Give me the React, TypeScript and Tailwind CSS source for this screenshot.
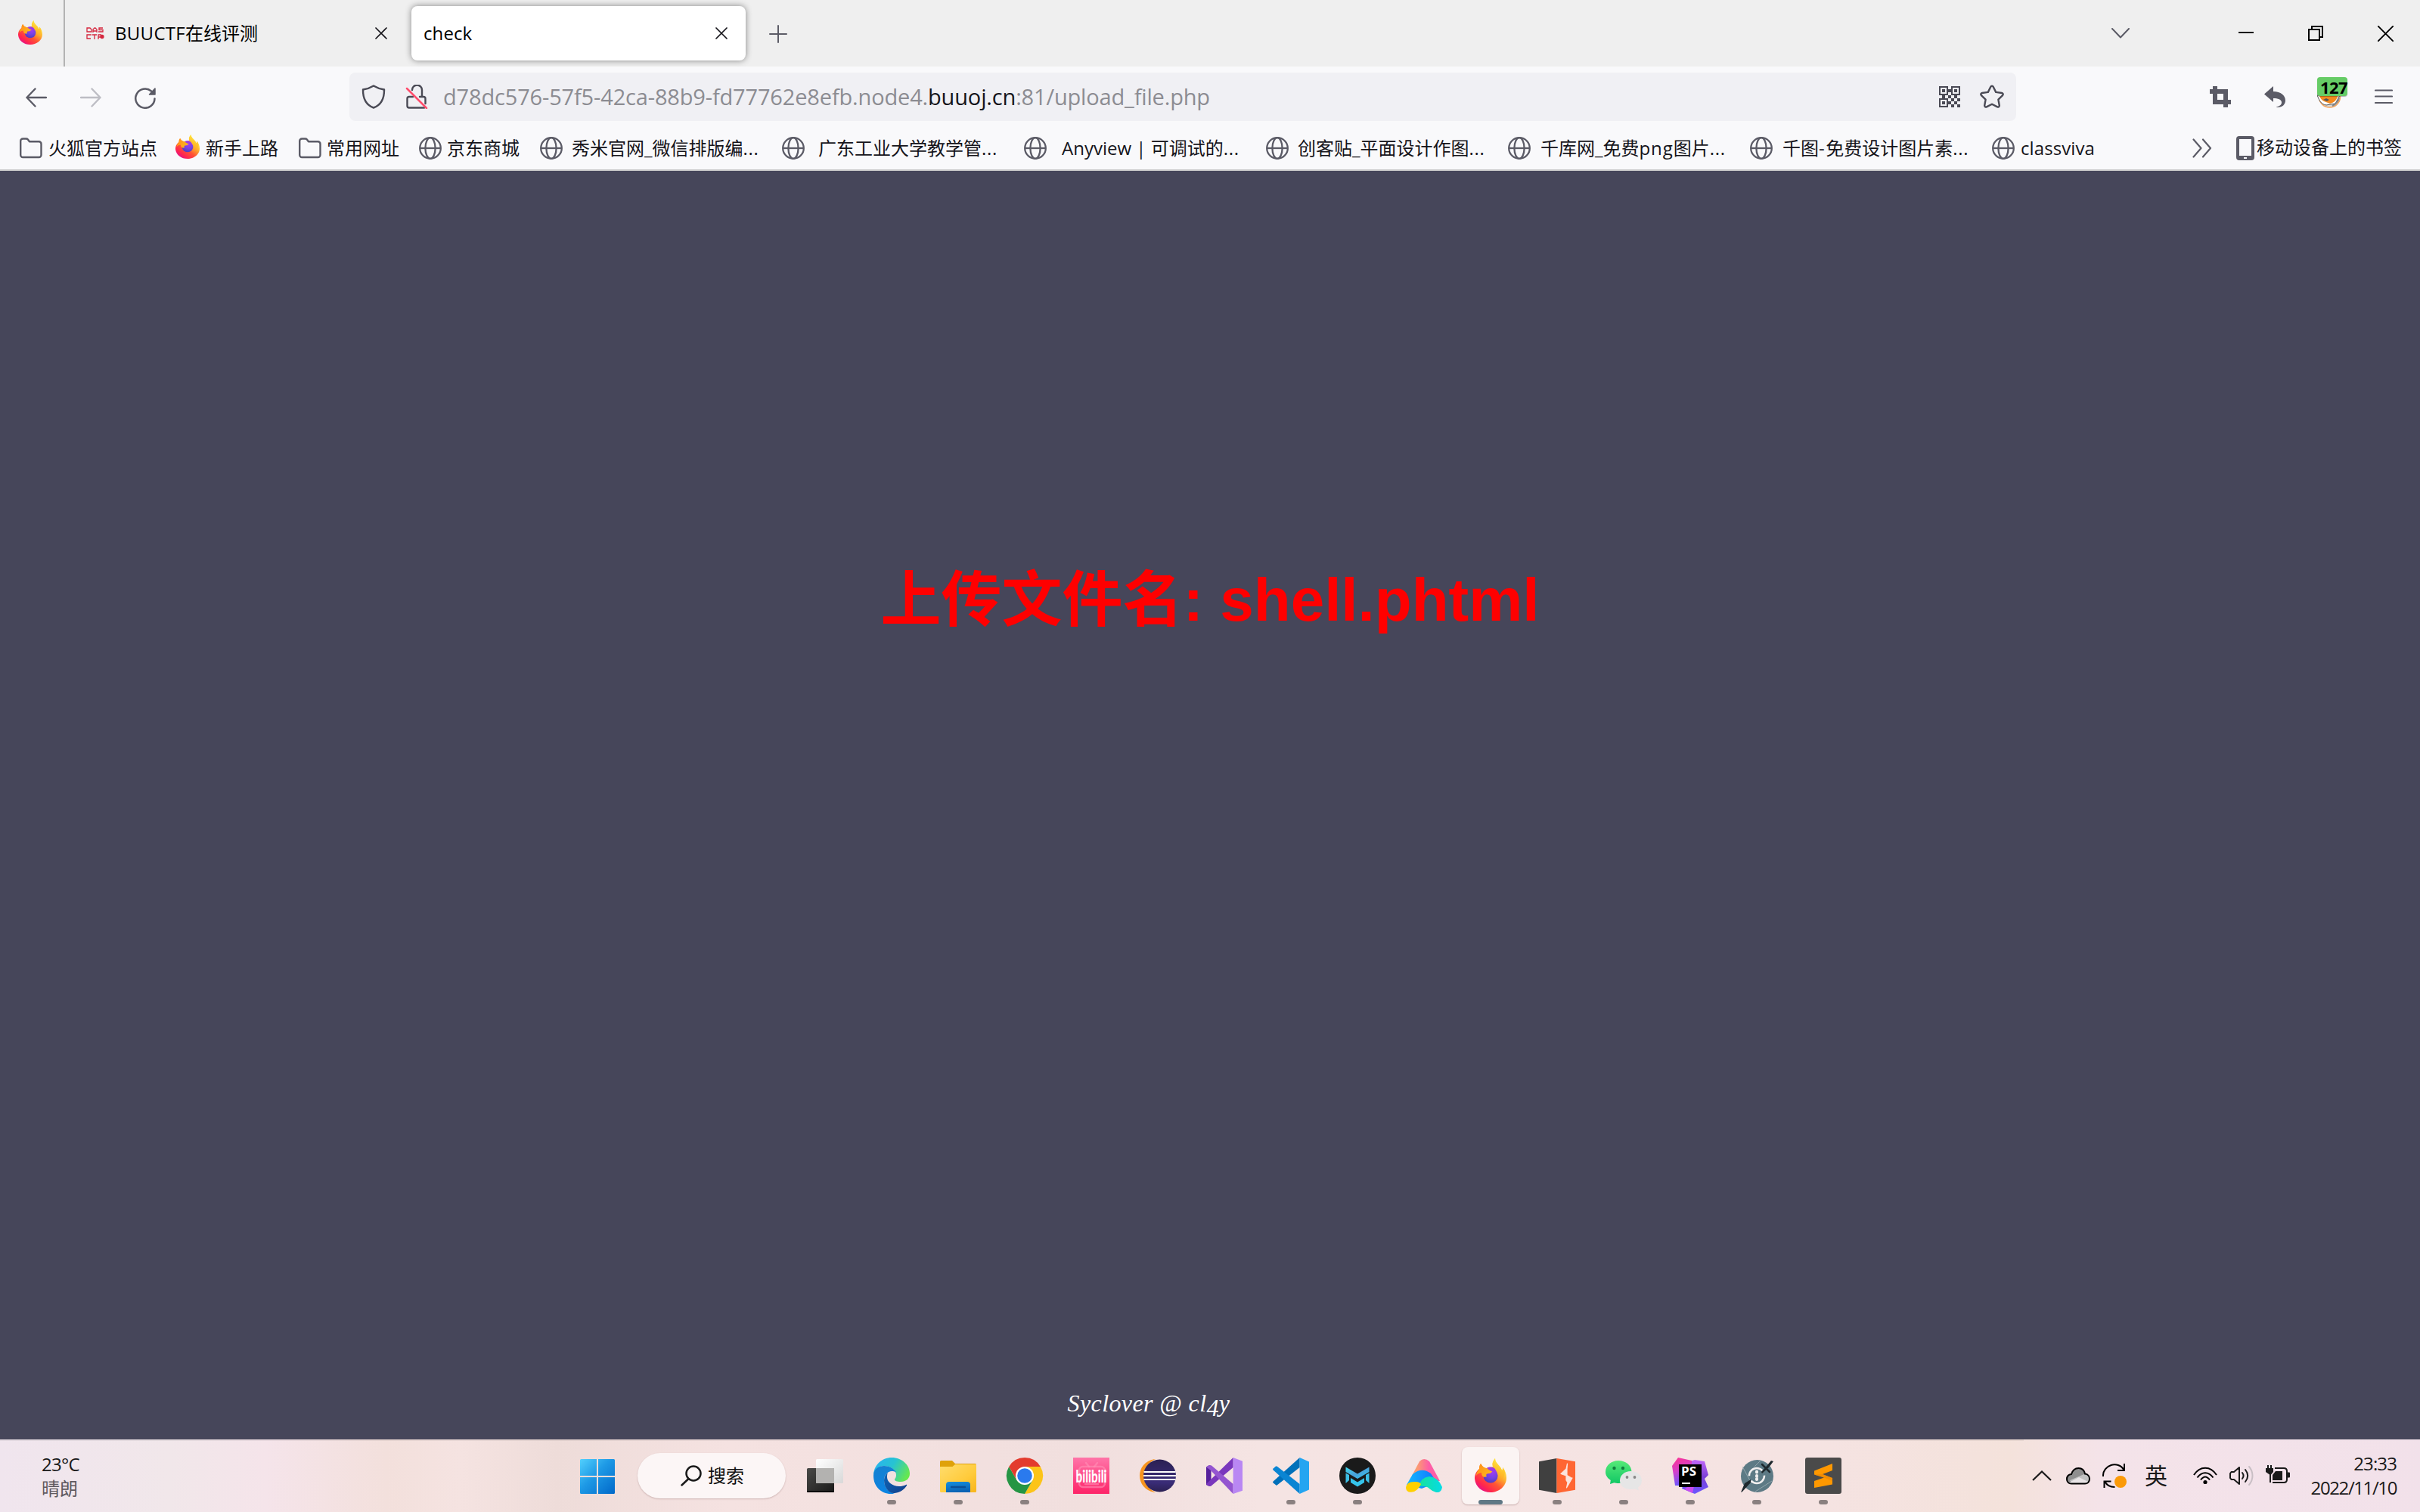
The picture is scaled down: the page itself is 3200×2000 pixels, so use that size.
import React, { type ReactNode } from "react";

/* ---------- browser glyphs ---------- */

function FirefoxLogo({ className, id }: { className: string; id: string }) {
  return (
    <svg viewBox="3 1 42 45" preserveAspectRatio="none" className={className}>
      <defs>
        <linearGradient id={id + "a"} x1="0.85" y1="0.1" x2="0.2" y2="0.95">
          <stop offset="0.05" stopColor="#fff44f" />
          <stop offset="0.35" stopColor="#ffb02e" />
          <stop offset="0.6" stopColor="#ff5634" />
          <stop offset="0.85" stopColor="#ff2450" />
          <stop offset="1" stopColor="#e3128a" />
        </linearGradient>
        <radialGradient id={id + "b"} cx="0.6" cy="0.25" r="0.8">
          <stop offset="0" stopColor="#a43bf0" />
          <stop offset="0.5" stopColor="#7542e5" />
          <stop offset="1" stopColor="#4a3db8" />
        </radialGradient>
        <linearGradient id={id + "c"} x1="0.7" y1="0" x2="0.4" y2="1">
          <stop offset="0" stopColor="#fff14a" />
          <stop offset="0.5" stopColor="#ffc02a" />
          <stop offset="1" stopColor="#ff8a1f" stopOpacity="0" />
        </linearGradient>
        <linearGradient id={id + "d"} x1="0" y1="0" x2="1" y2="0.7">
          <stop offset="0" stopColor="#ff8a16" />
          <stop offset="1" stopColor="#ffb81f" />
        </linearGradient>
      </defs>
      <path
        d="M30 1c-4 5-4 8-3 11l-9 2c-4-1-5-3-7-6-2 3-2 5-2 7C4 19 3 24 3 28c1 11 10 18 21 18s21-8 21-19c0-6-2-10-5-14 0 2 0 3-1 4-2-7-9-9-9-16Z"
        fill={`url(#${id}a)`}
      />
      <path
        d="M30 1c-4 5-4 8-2 12 6 4 8 10 5 16-1 3-4 5-8 6 10 0 17-5 18-15 0-2-1-5-3-7 0 2 0 3-1 4-2-7-9-9-9-16Z"
        fill={`url(#${id}c)`}
      />
      <circle cx="24" cy="24" r="9.6" fill={`url(#${id}b)`} />
      <path
        d="M11 8c-2 3-2 5-2 7-2 2-4 6-4 9 2-3 5-4 7-4 0 5 3 7 7 5-2-3 0-4 4-4 2-1 3-2 3-3-3-1-5-3-8-4-4-1-5-3-7-6Z"
        fill={`url(#${id}d)`}
      />
      <path d="M19 14c3-2 8-2 11 1 1 2 2 4 2 6-2-3-4-3-6-3-3 0-4-3-7-4Z" fill="#9b3be6" />
    </svg>
  );
}

function Folder() {
  return (
    <svg viewBox="0 0 32 32" className="size-8" fill="none" stroke="#5b5b66" strokeWidth="2.4" strokeLinejoin="round">
      <path d="M3.200 25V6.500a3 3 0 0 1 3-3h4.500a3 3 0 0 1 2.200 1l2 2.700h12.600a3 3 0 0 1 3 3V25a3 3 0 0 1-3 3H6.200a3 3 0 0 1-3-3Z" />
    </svg>
  );
}

function Globe() {
  return (
    <svg viewBox="0 0 32 32" className="size-8" fill="none" stroke="#5b5b66" strokeWidth="2.3">
      <circle cx="16" cy="16" r="13.800" />
      <ellipse cx="16" cy="16" rx="6.600" ry="13.800" />
      <path d="M2 16h28" />
    </svg>
  );
}

function Cross({ className }: { className: string }) {
  return (
    <svg viewBox="0 0 16 16" className={className} stroke="#15141a" strokeWidth="1.7" strokeLinecap="round">
      <path d="M1 1l14 14M15 1 1 15" />
    </svg>
  );
}

/* ---------- tab strip ---------- */

function TabStrip() {
  return (
    <div className="flex h-[88px] items-center bg-[#efefef] text-2xl text-black">
      <div className="flex h-full w-[86px] items-center border-r-2 border-[#b3b3b3] pl-6">
        <FirefoxLogo id="ft" className="h-8 w-8 -translate-y-px" />
      </div>
      <div className="flex h-full w-[458px] items-center pl-7">
        <svg viewBox="0 0 24 16" className="h-4 w-6" fill="none" stroke="#d5273e" strokeWidth="1.300">
          <path d="M1 1h4l2 2v3H1ZM9 7V3l2-2h1l2 2v4M9 5h5M22 1h-5v2.500h5V6h-6" />
          <path d="M7 10H1v5h5M8 10h6M11 10v6M16 16v-6h4M16 13h3" />
          <circle cx="21" cy="12.500" r="2" fill="#d5273e" />
        </svg>
        <span className="ml-3.5 w-[344px] leading-8">
          <span className="tracking-[0.3px]">BUUCTF</span>在线评测
        </span>
        <Cross className="size-4" />
      </div>
      <div className="flex h-[72px] w-[442px] items-center justify-between rounded-lg bg-white pl-4 pr-6 shadow-[0_0_8px_rgba(0,0,0,0.45)]">
        <span className="tracking-[0.1px]">check</span>
        <Cross className="size-4" />
      </div>
      <svg viewBox="0 0 24 24" className="ml-[31px] mt-0.5 size-6" stroke="#5b5b66" strokeWidth="2" strokeLinecap="round">
        <path d="M12 1v22M1 12h22" />
      </svg>
      <div className="ml-auto flex items-center">
        <svg viewBox="0 0 24 14" className="mr-36 h-[14px] w-6" fill="none" stroke="#5b5b66" strokeWidth="2" strokeLinecap="round" strokeLinejoin="round">
          <path d="m1 1 11 11.500L23 1" />
        </svg>
        <svg viewBox="0 0 20 20" className="mr-[72px] size-5" stroke="#000" strokeWidth="2">
          <path d="M0 9h20" />
        </svg>
        <svg viewBox="0 0 20 20" className="mr-[72px] size-5" fill="none" stroke="#000" strokeWidth="2">
          <path d="M1 5h14v14H1ZM5 5V1h14v14h-4" />
        </svg>
        <svg viewBox="0 0 20 20" className="mr-[35px] size-[21px]" stroke="#000" strokeWidth="1.800">
          <path d="m0 0 20 20M20 0 0 20" />
        </svg>
      </div>
    </div>
  );
}

/* ---------- navigation toolbar ---------- */

function QrIcon() {
  return (
    <svg viewBox="0 0 28 28" className="size-7" fill="#4a4a55">
      <path fillRule="evenodd" d="M0 0h12v12H0ZM2 2v8h8V2ZM16 0h12v12H16ZM18 2v8h8V2ZM0 16h12v12H0ZM2 18v8h8v-8Z" />
      <path d="M4 4h4v4H4ZM20 4h4v4h-4ZM4 20h4v4H4ZM12 4h4v4h-4ZM4 12h4v4H4ZM12 12h4v4h-4ZM20 12h4v4h-4ZM16 16h4v4h-4ZM24 16h4v4h-4ZM12 20h4v4h-4ZM20 20h4v4h-4ZM16 24h4v4h-4ZM24 24h4v4h-4Z" />
    </svg>
  );
}

function Toolbar() {
  return (
    <div className="flex h-[80px] items-center bg-[#f9f9fb] pl-[34px]">
      <svg viewBox="0 0 28 26" className="mt-0.5 h-[26px] w-7" fill="none" stroke="#5b5b66" strokeWidth="2.400" strokeLinecap="round" strokeLinejoin="round">
        <path d="M12.500 1.500 1.500 13l11 11.500M1.500 13H27" />
      </svg>
      <svg viewBox="0 0 28 26" className="ml-11 mt-0.5 h-[26px] w-7" fill="none" stroke="#bdbdc4" strokeWidth="2.400" strokeLinecap="round" strokeLinejoin="round">
        <path d="m15.500 1.500 11 11.500-11 11.500M26.500 13H1" />
      </svg>
      <svg viewBox="0 0 28 28" className="ml-11 mt-1 size-7" fill="none" stroke="#5b5b66" strokeWidth="2.500" strokeLinecap="round">
        <path d="M26.500 14.500A12.600 12.600 0 1 1 22 4.500" />
        <path d="M27 1v8h-7.500Z" fill="#5b5b66" stroke="#5b5b66" strokeWidth="1.500" strokeLinejoin="round" />
      </svg>
      <div className="ml-[256px] flex h-16 w-[2204px] items-center rounded-lg bg-[#f0f0f4] pl-4">
        <svg viewBox="0 0 32 32" className="size-8" fill="none" stroke="#4a4a55" strokeWidth="2.400" strokeLinejoin="round">
          <path d="M16 1.500C20 4 25 5.800 30 6.500c.2 12-4.500 20.500-14 24-9.500-3.500-14.200-12-14-24C7 5.800 12 4 16 1.500Z" />
        </svg>
        <svg viewBox="0 0 30 32" className="ml-[26px] h-8 w-[30px]" fill="none" stroke="#4a4a55" strokeWidth="2.400" strokeLinecap="round">
          <path d="M9 7a6.500 6.500 0 0 1 13 0v8M10 16H5a2.500 2.500 0 0 0-2.500 2.500V28A2.500 2.500 0 0 0 5 30.500h20M19 16h5a2.500 2.500 0 0 1 2.500 2.500V25" />
          <path d="m2 5 26 26" stroke="#ff4f6e" strokeWidth="2.500" />
        </svg>
        <span className="ml-5 whitespace-nowrap text-[29px] leading-10 tracking-[-0.16px] text-[#8c8c92]">
          d78dc576-57f5-42ca-88b9-fd77762e8efb.node4.<span className="text-[#15141a]">buuoj.cn</span>:81/upload_file.php
        </span>
        <div className="ml-auto mr-4 flex items-center gap-[26px]">
          <QrIcon />
          <svg viewBox="0 0 32 32" className="size-8" fill="none" stroke="#4a4a55" strokeWidth="2.400" strokeLinejoin="round">
            <path d="M14.300 2.800c.7-1.400 2.700-1.400 3.400 0l3.500 7.100 7.900 1.100c1.500.2 2.100 2 1 3.100l-5.700 5.500 1.400 7.900c.2 1.500-1.300 2.600-2.700 1.900L16 25.700l-7.100 3.700c-1.400.7-2.900-.4-2.700-1.900l1.400-7.900-5.700-5.500c-1.100-1.100-.5-2.900 1-3.100l7.900-1.100Z" />
          </svg>
        </div>
      </div>
      <svg viewBox="0 0 28 28" className="ml-[256px] size-7" fill="#5b5b66">
        <path fillRule="evenodd" d="M4 0h6v4h14v14h4v6h-4v4h-6v-4H4V10H0V4h4ZM10 10v8h8v-8Z" />
      </svg>
      <svg viewBox="0 0 28 28" className="ml-11 size-7" fill="#5b5b66">
        <path d="M12 0v7c10 0 16 5 16 12 0 5-4 9-10 9-1 0-2 0-2-.5 6-1.500 7-4 7-6 0-4-5-5.500-11-5.500v5L0 10.500Z" />
      </svg>
      <div className="relative ml-[42px] size-8">
        <svg viewBox="0 0 32 32" className="size-8">
          <circle cx="16.500" cy="16" r="14" fill="#d8d8d8" stroke="#f5a55c" strokeWidth="1.500" />
          <path d="M0 14c3 7 5 12 12 13l12-2 6-11Z" fill="#fff" stroke="#555" strokeWidth="1" />
          <path d="M2 13c2 4 3 7 7 9l8 3c5-1 9-4 11-12Z" fill="#f48a1f" />
          <path d="m8 20 4-2 4 2-3 2Z" fill="#555" />
          <path d="M20 28c4-2 8-5 9-11" fill="none" stroke="#888" strokeWidth="2" />
        </svg>
        <div className="absolute -top-2.5 left-0 flex h-[25px] w-10 items-center justify-center rounded-sm bg-[#66cc66] pl-1 font-[Noto_Sans] text-[22px] font-bold leading-none tracking-[-0.5px] text-black shadow-[0_1px_1px_rgba(0,0,0,0.3)]">
          127
        </div>
      </div>
      <svg viewBox="0 0 24 20" className="ml-11 h-5 w-6" stroke="#5b5b66" strokeWidth="2.200" strokeLinecap="round">
        <path d="M1 1.500h22M1 9.500h22M1 18h22" />
      </svg>
    </div>
  );
}

/* ---------- bookmarks ---------- */

function Bookmark({ icon, className, children }: { icon: ReactNode; className: string; children: ReactNode }) {
  return (
    <div className={"flex shrink-0 items-center whitespace-nowrap " + className}>
      {icon}
      <span>{children}</span>
    </div>
  );
}

function Dots() {
  return <span className="tracking-[0.7px]">...</span>;
}

function BookmarksBar() {
  return (
    <div className="flex h-[58px] items-center border-b-2 border-[#cccccc] bg-[#f9f9fb] pl-6 text-2xl leading-8 text-[#15141a]">
      <Bookmark className="w-[208px] gap-2" icon={<Folder />}>火狐官方站点</Bookmark>
      <Bookmark className="w-[161px] gap-2" icon={<FirefoxLogo id="fb" className="mb-1 h-8 w-8" />}>新手上路</Bookmark>
      <Bookmark className="w-[160px] gap-[7px]" icon={<Folder />}>常用网址</Bookmark>
      <Bookmark className="w-[160px] gap-1.5" icon={<Globe />}>京东商城</Bookmark>
      <Bookmark className="w-[320px] gap-[11px]" icon={<Globe />}>秀米官网_微信排版编<Dots /></Bookmark>
      <Bookmark className="w-[320px] gap-[17px]" icon={<Globe />}>广东工业大学教学管<Dots /></Bookmark>
      <Bookmark className="w-[320px] gap-[19px]" icon={<Globe />}>Anyview | 可调试的<Dots /></Bookmark>
      <Bookmark className="w-[320px] gap-[11px]" icon={<Globe />}>创客贴_平面设计作图<Dots /></Bookmark>
      <Bookmark className="w-[320px] gap-3" icon={<Globe />}>
        千库网_免费<span className="tracking-[0.9px]">png</span>图片<Dots />
      </Bookmark>
      <Bookmark className="w-[320px] gap-3" icon={<Globe />}>
        千图<span className="tracking-[1.5px]">-</span>免费设计图片素<Dots />
      </Bookmark>
      <Bookmark className="w-[140px] gap-[7px]" icon={<Globe />}>
        <span className="tracking-[0.1px]">classviva</span>
      </Bookmark>
      <div className="ml-auto mr-6 flex items-center">
        <svg viewBox="0 0 26 26" className="mr-8 size-[26px]" fill="none" stroke="#5b5b66" strokeWidth="2.200" strokeLinecap="round" strokeLinejoin="round">
          <path d="m1.500 1.500 10 11.500-10 11.500M14 1.500 24 13 14 24.500" />
        </svg>
        <svg viewBox="0 0 24 32" className="mr-[3px] h-8 w-6" fill="#5b5b66">
          <path fillRule="evenodd" d="M4 0h16a4 4 0 0 1 4 4v24a4 4 0 0 1-4 4H4a4 4 0 0 1-4-4V4a4 4 0 0 1 4-4ZM4 4v22h16V4ZM10 28v2h4v-2Z" />
        </svg>
        <span className="-translate-y-px">移动设备上的书签</span>
      </div>
    </div>
  );
}

/* ---------- taskbar icons, all on a 48 unit grid ---------- */

const WindowsIcon = (
  <>
    <defs>
      <linearGradient id="win" x1="0" y1="0" x2="48" y2="48" gradientUnits="userSpaceOnUse">
        <stop offset="0" stopColor="#56d4ff" />
        <stop offset="0.45" stopColor="#1e9ae6" />
        <stop offset="1" stopColor="#0067c8" />
      </linearGradient>
    </defs>
    <path fill="url(#win)" d="M2.500 2H23v22H1V3.500A1.500 1.500 0 0 1 2.500 2ZM25 2h20.500A1.500 1.500 0 0 1 47 3.500V24H25ZM1 26h22v22H2.500A1.500 1.500 0 0 1 1 46.500ZM25 26h22v20.500a1.500 1.500 0 0 1-1.500 1.500H25Z" />
  </>
);

const TaskViewIcon = (
  <>
    <defs>
      <linearGradient id="tv1" x1="0" y1="0" x2="1" y2="1">
        <stop offset="0" stopColor="#4a4a48" />
        <stop offset="1" stopColor="#1a1a19" />
      </linearGradient>
      <linearGradient id="tv2" x1="0" y1="0" x2="1" y2="1">
        <stop offset="0" stopColor="#ffffff" />
        <stop offset="1" stopColor="#d8d8d8" />
      </linearGradient>
    </defs>
    <rect x="0" y="14" width="36" height="32" rx="1.500" fill="url(#tv1)" />
    <path d="M0 44h36v.5a1.500 1.500 0 0 1-1.500 1.500h-33A1.500 1.500 0 0 1 0 44.500Z" fill="#050505" />
    <rect x="12" y="2" width="36" height="32" rx="1.500" fill="url(#tv2)" />
    <path d="M12 14h24v20H13.500a1.500 1.500 0 0 1-1.500-1.500Z" fill="#b3b2b0" />
  </>
);

const EdgeIcon = (
  <>
    <defs>
      <linearGradient id="eg1" x1="0" y1="0.2" x2="1" y2="0.6">
        <stop offset="0" stopColor="#2ab3f0" />
        <stop offset="0.5" stopColor="#27c3d2" />
        <stop offset="1" stopColor="#66e84e" />
      </linearGradient>
      <linearGradient id="eg2" x1="0.2" y1="0" x2="0.5" y2="1">
        <stop offset="0" stopColor="#1580d0" />
        <stop offset="1" stopColor="#0b84e3" />
      </linearGradient>
      <linearGradient id="eg3" x1="0" y1="0" x2="1" y2="0.8">
        <stop offset="0" stopColor="#0c66b8" />
        <stop offset="1" stopColor="#13418d" />
      </linearGradient>
    </defs>
    <path d="M0 24C0 10 11 0 24 0c14 0 24 10 24 21 0 7-5 11-12 11-5 0-8-1-8-3 0-1 2-2 2-6 0-7-8-12-16-12C6 11 1 18 0 24Z" fill="url(#eg1)" />
    <path d="M0 24c0-8 6-13 14-13 8 0 15 5 16 9-2-2-4-2-6-2-5 0-10 5-10 12 0 9 6 17 14 17-2 1-3 1-5 1C10 48 0 38 0 24Z" fill="url(#eg2)" />
    <path d="M19 20c-3 2-5 6-5 10 0 10 7 18 14 17 8-1 13-5 16-10 .6-1-.3-1.500-1-1-3 1.500-6 2-9 2-9 0-16-6-16-12 0-2 0-4 1-6Z" fill="url(#eg3)" />
  </>
);

const ExplorerIcon = (
  <>
    <defs>
      <linearGradient id="ex1" x1="0" y1="0" x2="1" y2="1">
        <stop offset="0" stopColor="#ffdd6e" />
        <stop offset="0.6" stopColor="#ffcb3c" />
        <stop offset="1" stopColor="#f8b51a" />
      </linearGradient>
      <linearGradient id="ex2" x1="0" y1="0" x2="0.3" y2="1">
        <stop offset="0" stopColor="#1590df" />
        <stop offset="1" stopColor="#0c63b4" />
      </linearGradient>
    </defs>
    <path d="M1.500 4H16l4 4h26.500a1.500 1.500 0 0 1 1.500 1.500V14H0V5.500A1.500 1.500 0 0 1 1.500 4Z" fill="#dfa10a" />
    <path d="M0 12h16.500L20 9h28v35.500a1.500 1.500 0 0 1-1.500 1.500h-45A1.500 1.500 0 0 1 0 44.500Z" fill="url(#ex1)" />
    <path d="M8 46V36a4 4 0 0 1 4-4h24a4 4 0 0 1 4 4v10Z" fill="url(#ex2)" />
    <path d="M15 39h18" stroke="#0b4f96" strokeWidth="2.400" strokeLinecap="round" />
  </>
);

const ChromeIcon = (
  <>
    <path d="M24 12h20.800A24 24 0 0 1 24 48l10.400-18Z" fill="#fcc419" />
    <path d="M3.200 12 13.600 30 24 36l10.400-6L24 48A24 24 0 0 1 3.200 12Z" fill="#259544" />
    <path d="M3.200 12 13.600 30 24 12h20.800A24 24 0 0 0 3.200 12Z" fill="#e33b2e" />
    <circle cx="24" cy="24" r="12" fill="#fff" />
    <circle cx="24" cy="24" r="9.800" fill="#2a7aee" />
  </>
);

const BilibiliIcon = (
  <>
    <defs>
      <linearGradient id="bl" x1="0" y1="0" x2="0" y2="1">
        <stop offset="0" stopColor="#ff74a8" />
        <stop offset="1" stopColor="#fd2468" />
      </linearGradient>
    </defs>
    <rect width="48" height="48" fill="url(#bl)" />
    <g fill="none" stroke="#ff8fb6" strokeOpacity="0.6" strokeWidth="2.500" strokeLinecap="round">
      <rect x="8" y="12" width="34" height="27" rx="5" />
      <path d="m17 7 4 5M32 7l-4 5M16 35h17" />
    </g>
    <text x="3.500" y="33" fontFamily="Lato" fontWeight="900" fontSize="23" textLength="41" lengthAdjust="spacingAndGlyphs" fill="#fff">
      bilibili
    </text>
  </>
);

const EclipseIcon = (
  <>
    <defs>
      <linearGradient id="ec" x1="0" y1="0" x2="0" y2="1">
        <stop offset="0" stopColor="#2b2052" />
        <stop offset="0.7" stopColor="#3a2c78" />
        <stop offset="1" stopColor="#2b2052" />
      </linearGradient>
    </defs>
    <path d="M21 2C8 3 0 13 0 24s8 21 21 22C11 41 6 33 6 24S11 7 21 2Z" fill="#f7941e" />
    <circle cx="26.500" cy="24" r="21.500" fill="url(#ec)" />
    <path d="M5.500 19h42M5 24h43M5.500 29h42" stroke="#fff" strokeWidth="2.200" />
  </>
);

const VisualStudioIcon = (
  <>
    <path d="M0 12.500 4 10l2.500 1v26L4 38l-4-2Z" fill="#56209c" />
    <path d="M35.600 0v13L6 38l-5-1.500L0 35Z" fill="#7a37bd" />
    <path d="m0 12.500 4-2.500 3 .5L35.600 35v13L6 17Z" fill="#9455d0" />
    <path d="M35.600 0 48 4.700v39L35.600 48Z" fill="#b987f3" />
  </>
);

const VsCodeIcon = (
  <>
    <path d="M35.600 0v13L5 37 .6 33.500a1.400 1.400 0 0 1 0-2Z" fill="#0070ba" />
    <path d="M.6 14.500 4 11.500h1.500L35.600 35v13L.6 16.500a1.400 1.400 0 0 1 0-2Z" fill="#0a85d3" />
    <path d="M35.600 0 48 5.500v37L35.600 48Z" fill="#24a5f1" />
  </>
);

const MIcon = (
  <>
    <defs>
      <linearGradient id="mi" x1="0" y1="0" x2="1" y2="1">
        <stop offset="0" stopColor="#3ddcf0" />
        <stop offset="0.5" stopColor="#4aa0d8" />
        <stop offset="1" stopColor="#2ec9f0" />
      </linearGradient>
    </defs>
    <circle cx="24" cy="24" r="24" fill="#1a1a1a" />
    <path d="m8.500 12.500 15.500 9 15.500-9v6.500L24 28 8.500 19Z" fill="url(#mi)" />
    <path d="M8.500 20.500 13 23v7l-4.500 4ZM39.500 20.500 35 23v7l4.500 4Z" fill="#3cbfe6" />
    <path d="m15 27 9 5.500 9-5.500v6l-9 5.500-9-5.500Z" fill="#35c4ea" />
  </>
);

const PeaksIcon = (
  <>
    <defs>
      <linearGradient id="pk" x1="0" y1="0" x2="1" y2="0">
        <stop offset="0.2" stopColor="#fb9a72" />
        <stop offset="0.6" stopColor="#fd5fa6" />
      </linearGradient>
      <linearGradient id="pk2" x1="0" y1="0" x2="1" y2="0">
        <stop offset="0" stopColor="#12b8ff" />
        <stop offset="1" stopColor="#1072ff" />
      </linearGradient>
      <linearGradient id="pk3" x1="0" y1="0" x2="1" y2="0">
        <stop offset="0" stopColor="#16e39a" />
        <stop offset="1" stopColor="#06dbe6" />
      </linearGradient>
    </defs>
    <path d="M8 24 18 5q6-6 13 0l14 26-14 0Z" fill="url(#pk)" />
    <path d="M1 36 9 22q12-10 24-1l8 12-20 8Z" fill="url(#pk2)" />
    <path d="M17 38q3-12 14-13 12 1 17 14-1 8-8 7-6-2-9-5-4-4-14-3Z" fill="url(#pk3)" />
    <path d="M0 40q1-9 13-8 5 0 7 3-3 7-9 10-10 3-11-5Z" fill="#ffd000" />
  </>
);

const BurpIcon = (
  <>
    <path d="m0 5.300 23.500-4.300v46L0 42.700Z" fill="#404040" />
    <path d="M23.500 1 48 5.300v37.400L23.500 47Z" fill="#ff6633" />
    <path d="M37.500 8 36 15l-7 6.500 7 2.500v6l7-3-6-3.500V15l.5-7ZM36 30l2 3-1.500 7 7.500-13-8 3Z" fill="#fbe3dc" stroke="#fbe3dc" strokeWidth="1.200" strokeLinejoin="round" />
  </>
);

const WeChatIcon = (
  <>
    <defs>
      <linearGradient id="wc" x1="0" y1="0" x2="0" y2="1">
        <stop offset="0" stopColor="#57ea78" />
        <stop offset="1" stopColor="#11c765" />
      </linearGradient>
    </defs>
    <path d="M17 4c10 0 17.500 6.500 17.500 15S27 34 17 34c-2 0-4-.3-5.500-.8L6 35l.8-5C2.500 27 0 23.500 0 19 0 10.500 7.500 4 17 4Z" fill="url(#wc)" />
    <circle cx="11.500" cy="14" r="2.200" fill="#11803f" />
    <circle cx="23" cy="14" r="2.200" fill="#11803f" />
    <path d="M33.500 18C42 18 48 23.500 48 30.500c0 4-2 7-5 9l1 4-5-2c-2 .4-3.500.5-5.500.5C25 42 19 37.500 19 30.500S25 18 33.500 18Z" fill="#e6e6e6" />
    <circle cx="28.500" cy="26" r="1.900" fill="#888" />
    <circle cx="38.500" cy="26" r="1.900" fill="#888" />
  </>
);

const PhpStormIcon = (
  <>
    <defs>
      <linearGradient id="ps" x1="0.5" y1="0" x2="0.5" y2="1">
        <stop offset="0" stopColor="#c168f8" />
        <stop offset="0.5" stopColor="#7c3fd6" />
        <stop offset="1" stopColor="#6b57ff" />
      </linearGradient>
      <linearGradient id="ps2" x1="0" y1="0" x2="0.3" y2="1">
        <stop offset="0" stopColor="#ff318c" />
        <stop offset="0.5" stopColor="#d540c8" />
        <stop offset="1" stopColor="#6b57ff" />
      </linearGradient>
    </defs>
    <path d="m24 5 6-2 13 2 5 18-5 5 5 11-18 9-17-7Z" fill="url(#ps)" />
    <path d="m0 11 8-11 18 4v15L10 37H4Z" fill="url(#ps2)" />
    <path d="m20 39 9-1-2 9-11-5Z" fill="#c84df0" />
    <rect x="9" y="9" width="30" height="30" fill="#000" />
    <text x="12" y="24" fontFamily="Open Sans" fontWeight="700" fontSize="15.500" textLength="20" lengthAdjust="spacingAndGlyphs" fill="#fff">
      PS
    </text>
    <path d="M13 34h11" stroke="#fff" strokeWidth="2" />
  </>
);

const SwordIcon = (
  <>
    <circle cx="24.500" cy="24.500" r="21.500" fill="#5d7a85" />
    <path d="m5 12 12 22M44 31 22 45M30 3l-9 9" stroke="#9fb0b6" strokeWidth="0.800" />
    <circle cx="24" cy="24" r="10" fill="none" stroke="#f1efef" strokeWidth="2.500" strokeDasharray="24 7" />
    <path d="M24 18.500v1M24 24v1M24 28v1" stroke="#f1efef" strokeWidth="4" strokeLinecap="round" />
    <path d="m3 46 5-12 8-5v4L5 45ZM30 19l8-9 5-6 3 1-6 8-9 8Z" fill="#1f292e" />
    <path d="m31 9 10 10" stroke="#1f292e" strokeWidth="2.500" strokeLinecap="round" />
  </>
);

const SublimeIcon = (
  <>
    <rect width="48" height="48" rx="3" fill="#4a4a4a" />
    <path d="m12 17.500 24-9.500v9l-13 5 13 5v8.500L12 40v-9l13-4.500-13-4Z" fill="#ff9800" />
    <path d="m23 22 13 5v4l-11-4.500-13-4Z" fill="#e68306" fillOpacity="0.6" />
  </>
);

function TaskIcon({ art, running = true }: { art: ReactNode; running?: boolean }) {
  return (
    <div className="flex h-24 w-[88px] flex-col items-center pt-6">
      <svg viewBox="0 0 48 48" className="size-12 overflow-visible">
        {art}
      </svg>
      {running && <div className="mt-2 h-1.5 w-3 rounded-full bg-[#8a8080]" />}
    </div>
  );
}

function Tray() {
  return (
    <div className="ml-auto flex items-center pr-[31px] text-[#1a1a1a]">
      <svg viewBox="0 0 26 14" className="mr-[19px] h-[14px] w-[26px]" fill="none" stroke="#1a1a1a" strokeWidth="2.200">
        <path d="M1 13 13 1.500 25 13" />
      </svg>
      <svg viewBox="0 0 32 24" className="mr-4 h-6 w-8">
        <path d="M7 22.500C3 22.500 1 19.500 1 16.500c0-3.500 2.500-6 6-6.500 1.500-5 5-8 9.500-8S24 5 25 9.500c4 .5 6 3.500 6 6.500 0 4-2.500 6.500-6 6.500Z" fill="#8f8f8f" />
        <path d="M25 9.500 5 18l3 4.500h17c8 0 8-12 0-13Z" fill="#c2c2c2" />
        <path d="m4 21 13-7 12 6-4 2.500H7Z" fill="#e8e4e6" />
        <path d="M7 22.500C3 22.500 1 19.500 1 16.500c0-3.500 2.500-6 6-6.500 1.500-5 5-8 9.500-8S24 5 25 9.500c4 .5 6 3.500 6 6.500 0 4-2.500 6.500-6 6.500Z" fill="none" stroke="#000" strokeWidth="2" />
      </svg>
      <svg viewBox="0 0 32 32" className="mr-6 size-8" fill="none" stroke="#000" strokeWidth="2">
        <path d="M1 17C0 2 21-5 28.500 8.500M29 0v9h-9M2.500 32V23.500h9M3.500 24c2 4 7 7 13 7" />
        <circle cx="24" cy="24" r="8" fill="#fb9a08" stroke="none" />
      </svg>
      <span className="mr-[34px] text-[30px] leading-10">英</span>
      <svg viewBox="0 0 32 24" className="mr-4 h-6 w-8" fill="none" stroke="#000" strokeWidth="2">
        <path d="M1 11C9-1.500 23-1.500 31 11M5.500 14.500c6-8.500 15-8.500 21 0M10 17.500c4-5.500 8-5.500 12 0" />
        <circle cx="16" cy="20.500" r="2.600" fill="#000" stroke="none" />
      </svg>
      <svg viewBox="0 0 32 28" className="mr-4 h-7 w-8" fill="none" stroke="#1a1a1a" strokeWidth="2" strokeLinejoin="round" strokeLinecap="round">
        <path d="M1 11v6l1.500 2H6l7 6V3L6 9H2.500Z" />
        <path d="M17 10c2 2.500 2 5.500 0 8M21 6c4 5 4 11 0 16" />
        <path d="M26 2c6 7 6 17 0 24" stroke="#c9bfc5" />
      </svg>
      <svg viewBox="0 0 32 24" className="mr-[30px] mt-[-4px] h-6 w-8" fill="#1a1a1a">
        <path d="M2 0h2v4h2V0h2v4h2v5l-3 3.500V23H5V12.500L0 9V4h2Z" />
        <path d="M12 4h12c3 0 4 1.500 4 4v11c0 2.500-1 4-4 4H9" fill="none" stroke="#1a1a1a" strokeWidth="2" />
        <path d="M28 9.500h3q1 0 1 1v5q0 1-1 1h-3ZM13 8h9v12H9v-7Z" />
      </svg>
      <div className="flex w-[111px] flex-col items-end text-2xl leading-8">
        <div className="tracking-[-0.9px]">23:33</div>
        <div className="whitespace-nowrap tracking-[-1.4px]">2022/11/10</div>
      </div>
    </div>
  );
}

function Taskbar() {
  return (
    <div className="relative flex h-24 items-center bg-[linear-gradient(90deg,#f0e5ee_0%,#f1e7ea_7%,#f5e4ea_11%,#f3e0dc_16%,#f5e3e1_19%,#eedcd9_23%,#f5e2e1_30%,#f1dfde_45%,#f5e4e3_52%,#f5e3e2_75%,#f4e2db_83%,#f4e3e9_87%,#f2e1ea_100%)]">
      <div className="absolute left-0 top-0 h-0.5 w-[2676px] bg-black/5" />
      <div className="w-[746px] pl-[55px] pt-0.5 text-2xl leading-8">
        <div className="tracking-[-0.7px] text-[#1a1a1a]">23°C</div>
        <div className="text-[#5f5a60]">晴朗</div>
      </div>
      <TaskIcon art={WindowsIcon} running={false} />
      <div className="ml-[9px] mr-2 flex h-[60px] w-[196px] items-center justify-center rounded-full bg-[#fcf6f6] pl-0.5 text-2xl text-[#111] shadow-[0_1px_2px_rgba(120,80,80,0.3)]">
        <svg viewBox="0 0 28 28" className="mr-2 size-7" fill="none" stroke="#1a1a1a" strokeWidth="2.500" strokeLinecap="round">
          <circle cx="17" cy="11" r="9.500" />
          <path d="M10.500 18 1.500 26.500" />
        </svg>
        搜索
      </div>
      <TaskIcon art={TaskViewIcon} running={false} />
      <TaskIcon art={EdgeIcon} />
      <TaskIcon art={ExplorerIcon} />
      <TaskIcon art={ChromeIcon} />
      <TaskIcon art={BilibiliIcon} running={false} />
      <TaskIcon art={EclipseIcon} running={false} />
      <TaskIcon art={VisualStudioIcon} running={false} />
      <TaskIcon art={VsCodeIcon} />
      <TaskIcon art={MIcon} />
      <TaskIcon art={PeaksIcon} running={false} />
      <div className="mx-1.5 flex h-[76px] w-[76px] flex-col items-center justify-between rounded-lg bg-[#fbf4f3] pt-[15px] shadow-[0_1px_2px_rgba(120,80,80,0.35)]">
        <FirefoxLogo id="fk" className="h-[45px] w-[42px]" />
        <div className="h-1.5 w-8 rounded-full bg-[#5f7885]" />
      </div>
      <TaskIcon art={BurpIcon} />
      <TaskIcon art={WeChatIcon} />
      <TaskIcon art={PhpStormIcon} />
      <TaskIcon art={SwordIcon} />
      <TaskIcon art={SublimeIcon} />
      <Tray />
    </div>
  );
}

export default function App() {
  return (
    <div className="flex h-[2000px] w-[3200px] flex-col overflow-hidden font-['Open_Sans','Noto_Sans_CJK_SC',sans-serif]">
      <TabStrip />
      <Toolbar />
      <BookmarksBar />
      <main className="flex flex-1 flex-col items-center justify-between bg-[#46465a] pb-5 pt-[515px]">
        <h1 className="whitespace-nowrap font-['Liberation_Sans','Noto_Sans_CJK_SC',sans-serif] text-[80px] font-bold leading-[106px] text-[#ff0000]">
          上传文件名: shell.phtml
        </h1>
        <p className="mr-[162px] whitespace-nowrap font-['Liberation_Serif',serif] text-[32px] italic leading-[44px] tracking-[0.4px] text-white">
          Syclover @ cl<span className="align-[-6px]">4</span>y
        </p>
      </main>
      <Taskbar />
    </div>
  );
}
